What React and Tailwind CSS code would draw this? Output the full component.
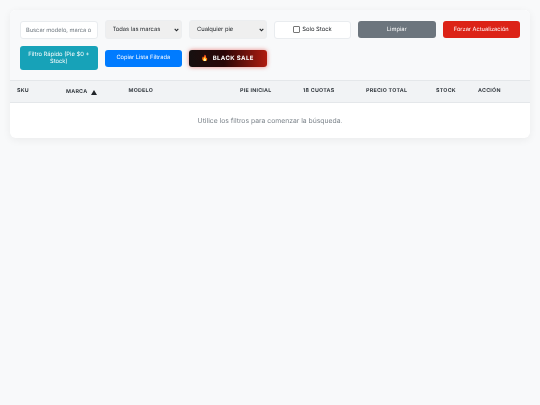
const cols = [
  ["SKU", "w-[49px]"],
  ["MARCA", "w-[62.5px]"],
  ["MODELO", "w-[111.5px]"],
  ["PIE INICIAL", "w-[63px]"],
  ["18 CUOTAS", "w-[63px]"],
  ["PRECIO TOTAL", "w-[70px]"],
  ["STOCK", "w-[42px]"],
  ["ACCIÓN", "w-[59px]"],
];

const selectCls =
  "block appearance-none w-full h-[19px] rounded-[3px] border border-[#eceef0] bg-[#efefef] pl-[7px] pr-[10px] pt-[1px] text-[5.8px] text-[#212529] outline-none [text-rendering:geometricPrecision]";
const btnCls =
  "w-full h-[17px] rounded-[3px] pt-[1px] text-white text-[5.7px] flex items-center justify-center text-center [text-rendering:geometricPrecision]";

function Select({ label }) {
  return (
    <div className="relative w-full">
      <select className={selectCls} defaultValue="a">
        <option value="a">{label}</option>
      </select>
      <svg
        width="5"
        height="4"
        viewBox="0 0 5 4"
        className="absolute right-[3px] top-[8px] fill-none stroke-[#212529] stroke-[1.1]"
      >
        <path d="M0.7 0.8 L2.5 2.8 L4.3 0.8" />
      </svg>
    </div>
  );
}

export default function App() {
  return (
    <div className="min-h-[405px] bg-[#f8f9fa] p-[10px] font-['Inter',sans-serif] [text-rendering:geometricPrecision]">
      <div className="rounded-[6px] bg-white shadow-[0_2px_8px_rgba(0,0,0,0.06)] overflow-hidden blur-[0.3px]">
        <div className="bg-[#f8f9fa] px-[10px] pt-[10px] pb-[10px] grid grid-cols-6 gap-x-[7px] gap-y-[7px] items-center">
          <input
            readOnly
            placeholder="Buscar modelo, marca o SKU..."
            className="w-full h-[18px] rounded-[3px] border border-[#e9ecef] bg-white pl-[5px] pr-[6px] pt-[1px] text-[5.7px] text-[#212529] placeholder:text-[#6c757d] outline-none [text-rendering:geometricPrecision]"
          />
          <Select label="Todas las marcas" />
          <Select label="Cualquier pie" />
          <label className="w-full h-[18px] rounded-[3px] border border-[#e9ecef] bg-white flex items-center justify-center gap-[2.5px] text-[5.9px] text-[#212529]">
            <input
              type="checkbox"
              className="appearance-none w-[7px] h-[7px] m-0 rounded-[1px] border-[0.5px] border-[#767676] bg-white"
            />
            <span className="pt-[1px]">Solo Stock</span>
          </label>
          <button className={`${btnCls} bg-[#6c757d]`}>Limpiar</button>
          <button className={`${btnCls} bg-[#dc2317]`}>Forzar Actualización</button>
          <button className="w-full h-[24px] rounded-[3px] bg-[#17a2b8] text-white text-[5.8px] leading-[7px] px-[5px] text-center [text-rendering:geometricPrecision]">
            Filtro Rápido (Pie $0 + Stock)
          </button>
          <button className={`${btnCls} bg-[#007bff]`}>Copiar Lista Filtrada</button>
          <button className="w-full h-[17px] rounded-[3px] bg-[linear-gradient(90deg,#161010_0%,#2a0707_45%,#b01c10_100%)] shadow-[0_0_4px_rgba(220,35,23,0.55)] text-white text-[6px] font-bold tracking-[0.4px] flex items-center justify-center gap-[3px] [text-rendering:geometricPrecision]">
            <span>🔥</span>
            <span>BLACK SALE</span>
          </button>
        </div>
        <table className="w-full table-fixed border-collapse">
          <thead>
            <tr className="bg-[#f1f3f5] h-[22px] border-t border-b border-[#e4e7ea]">
              {cols.map(([label, w]) => (
                <th
                  key={label}
                  className={`${w} pl-[7px] p-0 text-left align-middle text-[5.3px] font-bold tracking-[0.25px] text-[#343a40] whitespace-nowrap`}
                >
                  {label === "MARCA" ? (
                    <span className="inline-flex items-center gap-[4px] pt-[2px]">
                      {label}
                      <svg width="6" height="5" viewBox="0 0 6 5" className="fill-[#212529]">
                        <path d="M3 0 L6 5 L0 5 Z" />
                      </svg>
                    </span>
                  ) : (
                    label
                  )}
                </th>
              ))}
            </tr>
          </thead>
          <tbody>
            <tr>
              <td colSpan={8} className="h-[35px] pt-[2px] text-center text-[6.8px] text-[#7b838a] align-middle">
                Utilice los filtros para comenzar la búsqueda.
              </td>
            </tr>
          </tbody>
        </table>
      </div>
    </div>
  );
}
